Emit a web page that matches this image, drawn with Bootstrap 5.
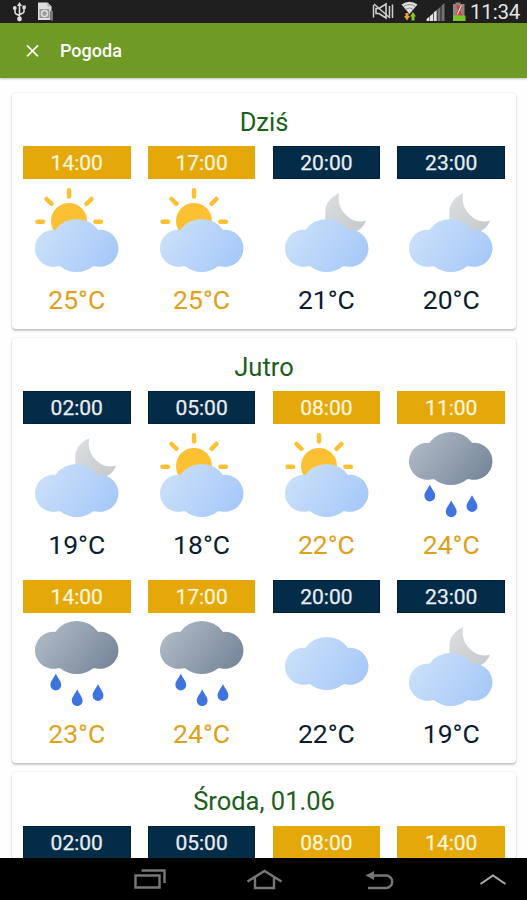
<!DOCTYPE html>
<html lang="pl">
<head>
<meta charset="utf-8">
<meta name="viewport" content="width=device-width, initial-scale=1">
<title>Pogoda</title>
<link href="https://cdn.jsdelivr.net/npm/bootstrap@5.3.0/dist/css/bootstrap.min.css" rel="stylesheet">
<style>
body{font-family:Roboto,"Noto Sans",sans-serif;background:#fefefe}
.screen{height:900px}
.status-bar{height:23px;background:#1f1f1f;color:#e4e4e4}
.status-time{font-size:20.5px;line-height:22px;width:49px;letter-spacing:-.2px}
.app-bar{height:55px;background:#6f9a25;box-shadow:0 1px 2px rgba(0,0,0,.25)}
.app-title{font-size:18px;font-weight:500;line-height:24px}
.forecast{padding:15px 11px 0 12px;gap:9.5px}
.day{border-radius:4px;box-shadow:0 2px 2px rgba(0,0,0,.2),0 0 2px rgba(0,0,0,.16);padding:0 11px 0 11px}
.day-title{font-size:25.5px;line-height:30px;padding:14px 0 9.2px;color:#1c5e1c}
.hours{display:grid;grid-template-columns:repeat(4,107.5px);justify-content:space-between;row-gap:6.5px}
.hour{height:182.5px;color:#0b1c30}
.hour-time{height:33px;font-size:21px;line-height:34px;background:#032c49;color:#e9edf2;box-shadow:inset 0 0 0 1px #04203a;-webkit-text-stroke:.25px}
.hour-pic{width:108px;height:100px}
.hour-temp{font-size:26.5px;line-height:30px;margin-top:6px}
.day-hour{color:#e0a01a}
.day-hour .hour-time{background:#e5a80a;color:#fff6dc;box-shadow:none}
.nav-bar{height:42px;background:#000}
</style>
<script src="https://cdn.jsdelivr.net/npm/bootstrap@5.3.0/dist/js/bootstrap.bundle.min.js"></script>
</head>
<body>
<svg width="0" height="0" class="position-absolute" aria-hidden="true">
<defs>
<linearGradient id="blue" gradientUnits="userSpaceOnUse" x1="20" y1="45" x2="88" y2="90"><stop offset="0" stop-color="#cbe0fa"/><stop offset="1" stop-color="#a6c8f8"/></linearGradient>
<linearGradient id="gray" gradientUnits="userSpaceOnUse" x1="25" y1="45" x2="85" y2="92"><stop offset="0" stop-color="#acb7c3"/><stop offset="1" stop-color="#76869a"/></linearGradient>
<linearGradient id="silver" x1="0" y1="0" x2="1" y2="1"><stop offset="0" stop-color="#dcdfe1"/><stop offset="1" stop-color="#c6c9cc"/></linearGradient>
<path id="cloud" d="M32.200 50.900A26.500 26.500 0 0 1 75.200 50.900A18.500 18.500 0 1 1 72.600 87.300L70.200 87.300A26.500 26.500 0 0 1 37.200 87.300L34.800 87.300A18.500 18.500 0 1 1 32.200 50.900Z"/>
<path id="drop" d="M0 0C2.2 4.5 5.4 7.5 5.4 11.2A5.4 5.4 0 0 1-5.4 11.2C-5.4 7.5-2.2 4.5 0 0Z" fill="#3f73e0"/>
<symbol id="sunny" viewBox="0 0 108 100"><path d="M46 11.2v6.2M23.5 20l5 4.8M68.500 20l-5 4.800M14.500 42.800h5.500M72.400 42.800h5.500" stroke="#fcc133" stroke-width="4.500" stroke-linecap="round"/><circle cx="46" cy="42" r="18" fill="#fcc133"/><use href="#cloud" fill="url(#blue)"/></symbol>
<symbol id="moon" viewBox="0 0 108 100"><path d="M66.300 14.200C57 18 51.800 25.500 52.300 34V44L60 52H84C88.500 49.500 91.500 46 93 41.500C86 44 78.500 41.500 72.500 35.500C66.500 29.500 64.500 21.500 66.300 14.200Z" fill="url(#silver)"/><use href="#cloud" fill="url(#blue)"/></symbol>
<symbol id="cloudy" viewBox="0 0 108 100"><use href="#cloud" fill="url(#blue)" y="-16"/></symbol>
<symbol id="rain" viewBox="0 0 108 100"><use href="#cloud" fill="url(#gray)" y="-32"/><use href="#drop" x="32.800" y="60.800"/><use href="#drop" x="54.200" y="76.500"/><use href="#drop" x="75" y="71.300"/></symbol>
</defs>
</svg>
<div class="screen d-flex flex-column overflow-hidden">
  <div class="status-bar d-flex align-items-center justify-content-between flex-shrink-0">
    <svg width="60" height="23" viewBox="0 0 60 23" fill="none">
      <path d="M19.500 5v14M15 9v3.500q0 1.500 4.500 3M24 8.500v3q0 1.500-4.500 3" stroke="#ddd" stroke-width="1.600"/>
      <path d="M19.500 2l2.500 4h-5z" fill="#ddd"/><circle cx="19.500" cy="19" r="2.400" fill="#ddd"/><circle cx="14.800" cy="8" r="1.900" fill="#ddd"/><path d="M22.400 5.500h3.400v3.400h-3.400z" fill="#ddd"/>
      <path d="M38 2.500h9.500l4 4V20H38z" fill="#dedede"/><path d="M47.500 2.500v4h4z" fill="#aaa"/><path d="M39.500 9h10v9h-10z" fill="#999"/><circle cx="44.500" cy="13.500" r="3" stroke="#ddd" stroke-width="1.500"/><path d="M50 11h3v9.500h-3z" fill="#777"/>
    </svg>
    <div class="d-flex align-items-center">
      <svg width="102" height="23" viewBox="-6.500 0 102 23" fill="none">
        <path d="M5.500 8.500h3l7-4.500v14l-7-4.500h-3z" stroke="#cfcfcf" stroke-width="1.600"/><path d="M3.500 4l16 14M3 5v12.500M19 6v10.500M22 4.500v13.500" stroke="#cfcfcf" stroke-width="1.500"/>
        <path d="M31 4.500Q39-1 47 4.500L39 14z" fill="#dedede"/><path d="M33 6.600q6-4.200 12 0M35.300 9.300q3.700-2.700 7.400 0" stroke="#777" stroke-width=".8"/>
        <path d="M35 13h3v3h1.500l-3 4.500-3-4.500h1.500z" fill="#f0a030"/><path d="M41 20.500v-4h-1.500l3-4.500 3 4.500H44v4z" fill="#8bc529"/>
        <path d="M56 21v-2l3-2.500V21zM59.500 21v-5l3-2.500V21zM63.200 21v-8.500l3-2.500v11z" fill="#e3e3e3"/><path d="M67 21V9.300l3-2.600V21zM71 21V5.800l3-2.800v18z" fill="#737373"/>
        <path d="M85 2.500h5V4h4v12H82.500V4H85z" fill="#8b8585"/><path d="M82.500 15.500H95V21H82.500z" fill="#79c52b"/><path d="M85 5l7.500 1.500-3 3.500 2.500 5.500-7-1 2.500-4.500z" fill="#e23b31"/><path d="M90.800 5.500l-4 9" stroke="#fff" stroke-width="1"/>
      </svg>
      <span class="status-time ms-1 me-2 text-nowrap">11:34</span>
    </div>
  </div>
  <header class="app-bar d-flex align-items-center flex-shrink-0 text-white">
    <svg width="60" height="24" viewBox="0 0 60 24"><path d="M27 6.300l11 11M38 6.300l-11 11" stroke="#f4f8e8" stroke-width="1.800"/></svg>
    <span class="app-title">Pogoda</span>
  </header>
  <main class="forecast d-flex flex-column flex-grow-1 overflow-hidden">
    <section class="day bg-white flex-shrink-0">
      <h2 class="day-title m-0 text-center fw-normal">Dziś</h2>
      <div class="hours text-center">
        <div class="hour day-hour"><div class="hour-time">14:00</div><svg class="hour-pic d-block"><use href="#sunny"/></svg><div class="hour-temp">25°C</div></div>
        <div class="hour day-hour"><div class="hour-time">17:00</div><svg class="hour-pic d-block"><use href="#sunny"/></svg><div class="hour-temp">25°C</div></div>
        <div class="hour"><div class="hour-time">20:00</div><svg class="hour-pic d-block"><use href="#moon"/></svg><div class="hour-temp">21°C</div></div>
        <div class="hour"><div class="hour-time">23:00</div><svg class="hour-pic d-block"><use href="#moon"/></svg><div class="hour-temp">20°C</div></div>
      </div>
    </section>
    <section class="day bg-white flex-shrink-0">
      <h2 class="day-title m-0 text-center fw-normal">Jutro</h2>
      <div class="hours text-center">
        <div class="hour"><div class="hour-time">02:00</div><svg class="hour-pic d-block"><use href="#moon"/></svg><div class="hour-temp">19°C</div></div>
        <div class="hour"><div class="hour-time">05:00</div><svg class="hour-pic d-block"><use href="#sunny"/></svg><div class="hour-temp">18°C</div></div>
        <div class="hour day-hour"><div class="hour-time">08:00</div><svg class="hour-pic d-block"><use href="#sunny"/></svg><div class="hour-temp">22°C</div></div>
        <div class="hour day-hour"><div class="hour-time">11:00</div><svg class="hour-pic d-block"><use href="#rain"/></svg><div class="hour-temp">24°C</div></div>
        <div class="hour day-hour"><div class="hour-time">14:00</div><svg class="hour-pic d-block"><use href="#rain"/></svg><div class="hour-temp">23°C</div></div>
        <div class="hour day-hour"><div class="hour-time">17:00</div><svg class="hour-pic d-block"><use href="#rain"/></svg><div class="hour-temp">24°C</div></div>
        <div class="hour"><div class="hour-time">20:00</div><svg class="hour-pic d-block"><use href="#cloudy"/></svg><div class="hour-temp">22°C</div></div>
        <div class="hour"><div class="hour-time">23:00</div><svg class="hour-pic d-block"><use href="#moon"/></svg><div class="hour-temp">19°C</div></div>
      </div>
    </section>
    <section class="day bg-white flex-shrink-0">
      <h2 class="day-title m-0 text-center fw-normal">Środa, 01.06</h2>
      <div class="hours text-center">
        <div class="hour-time">02:00</div>
        <div class="hour-time">05:00</div>
        <div class="day-hour"><div class="hour-time">08:00</div></div>
        <div class="day-hour"><div class="hour-time">14:00</div></div>
      </div>
    </section>
  </main>
  <nav class="nav-bar flex-shrink-0">
    <svg class="d-block" width="527" height="42" viewBox="0 0 527 42" fill="none" stroke="#777" stroke-width="2.400">
      <path d="M135.500 17.500h24v12h-24zM141.500 12.500h23V25"/>
      <path d="M247.500 23.500L264.500 13l17 10.500M255 19v11h19V19"/>
      <path d="M370 17.500h16a6.200 6.200 0 0 1 0 12.500h-18"/><path d="M365.500 17.500l8.500-4.500v9z" fill="#777" stroke="none"/>
      <path d="M480.500 26L493 17.500 505.500 26" stroke="#aaa" stroke-width="2"/>
    </svg>
  </nav>
</div>
</body>
</html>
